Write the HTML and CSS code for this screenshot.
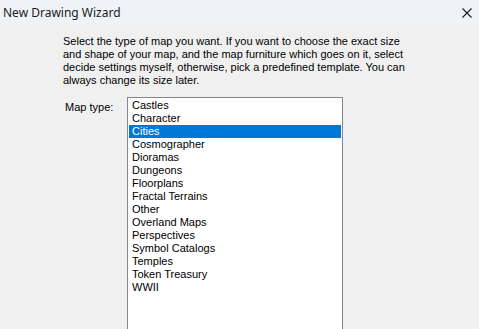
FILE: index.html
```html
<!DOCTYPE html>
<html lang="en">
<head>
    <meta charset="UTF-8">
    <title>New Drawing Wizard</title>
    <link rel="stylesheet" href="styles.css">
</head>
<body>
    <div class="window">
        <div class="titlebar">
            <span class="title">New Drawing Wizard</span>
            <span class="close">
                <svg width="10" height="10" viewBox="0 0 10 10">
                    <path d="M0.5 0.5 L9.5 9.5 M9.5 0.5 L0.5 9.5" stroke="#1a1a1a" stroke-width="1.1" fill="none"/>
                </svg>
            </span>
        </div>

        <div class="content">
            <p class="intro">Select the type of map you want. If you want to choose the exact size and shape of your map, and the map furniture which goes on it, select decide settings myself, otherwise, pick a predefined template. You can always change its size later.</p>

            <div class="field">
                <label class="field-label">Map type:</label>
                <div class="listbox">
                    <div class="item">Castles</div>
                    <div class="item">Character</div>
                    <div class="item selected">Cities</div>
                    <div class="item">Cosmographer</div>
                    <div class="item">Dioramas</div>
                    <div class="item">Dungeons</div>
                    <div class="item">Floorplans</div>
                    <div class="item">Fractal Terrains</div>
                    <div class="item">Other</div>
                    <div class="item">Overland Maps</div>
                    <div class="item">Perspectives</div>
                    <div class="item">Symbol Catalogs</div>
                    <div class="item">Temples</div>
                    <div class="item">Token Treasury</div>
                    <div class="item">WWII</div>
                </div>
            </div>
        </div>
    </div>
</body>
</html>
```

FILE: styles.css
```css
* {
    margin: 0;
    padding: 0;
    box-sizing: border-box;
}

body {
    width: 479px;
    height: 329px;
    overflow: hidden;
    background: #f0f0f0;
    font-family: 'Liberation Sans', Arial, sans-serif;
    font-size: 11px;
    color: #000;
}

.titlebar {
    height: 24px;
    background: #eff3f8;
    display: flex;
    align-items: center;
    justify-content: space-between;
    padding: 0 7px 0 3px;
}

.title {
    font-family: 'Noto Sans', 'Open Sans', sans-serif;
    font-size: 12px;
    color: #1a1a1a;
}

.close {
    display: flex;
    align-items: center;
    padding-top: 1px;
}

.content {
    padding: 11px 0 0 63px;
}

.intro {
    width: 345px;
    line-height: 13px;
}

.field {
    display: flex;
    align-items: flex-start;
    margin-top: 10px;
}

.field-label {
    width: 64px;
    padding: 4px 0 0 2px;
    line-height: 13px;
}

.listbox {
    width: 216px;
    height: 232px;
    background: #fff;
    border: 1px solid #828790;
    border-bottom: none;
    padding: 1px;
}

.item {
    height: 13px;
    line-height: 13px;
    padding-left: 3px;
    white-space: nowrap;
}

.item.selected {
    background: #0078d7;
    color: #fff;
}
```
